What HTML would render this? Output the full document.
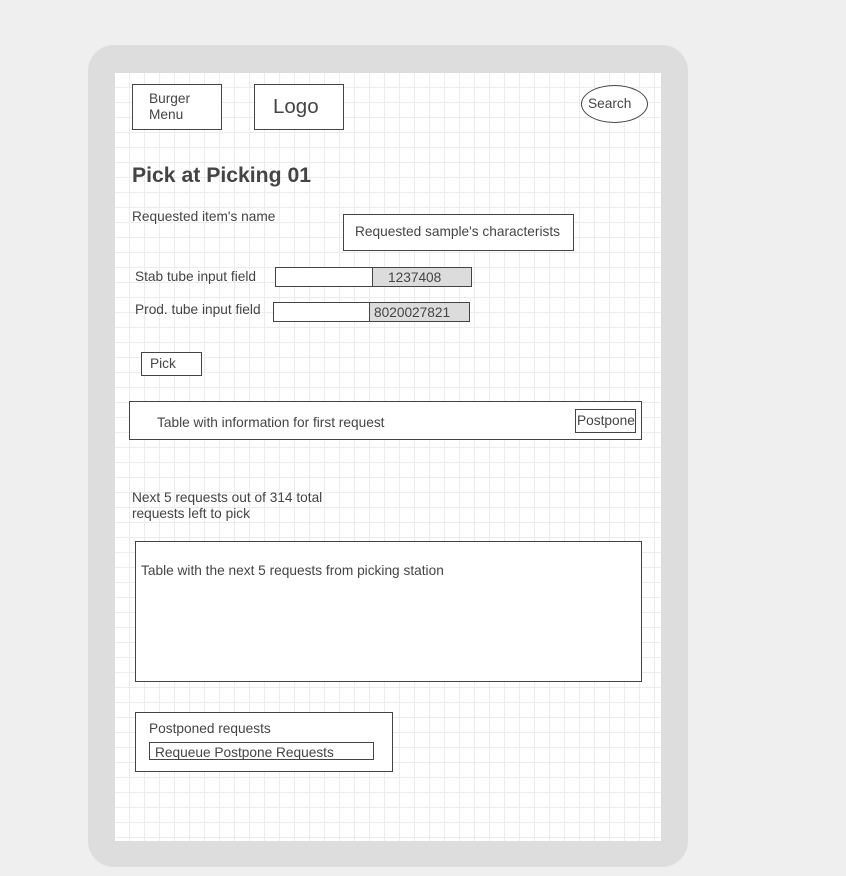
<!DOCTYPE html>
<html><head><style>
body{margin:0;width:846px;height:876px;background:#efefef;position:relative;font-family:"Liberation Sans",sans-serif;color:#444;overflow:hidden}
.frame{position:absolute;left:88px;top:45px;width:600px;height:822px;background:#dddddd;border-radius:26px}
.screen{position:absolute;left:115px;top:73px;width:546px;height:768px;background-color:#fff;
background-image:linear-gradient(#ececec 1px,transparent 1px),linear-gradient(90deg,#ececec 1px,transparent 1px);
background-size:15px 15px;background-position:-1px -1px}
.a{position:absolute;font-size:13.7px;line-height:16px;white-space:nowrap}
.b{position:absolute;border:1px solid #444;box-sizing:border-box;background:#fff}
</style></head><body>
<div class="frame"></div><div class="screen"></div>
<div class="b" style="left:132px;top:84px;width:90px;height:46px"></div>
<div class="a" style="left:149px;top:91px">Burger<br>Menu</div>
<div class="b" style="left:254px;top:84px;width:90px;height:46px"></div>
<div class="a" style="left:273px;top:96px;font-size:20.5px;line-height:22px">Logo</div>
<div class="b" style="left:581px;top:85px;width:67px;height:38px;border-radius:50%"></div>
<div class="a" style="left:588px;top:96px">Search</div>
<div class="a" style="left:132px;top:164px;font-size:21.2px;line-height:24px;font-weight:bold">Pick at Picking 01</div>
<div class="a" style="left:132px;top:209px">Requested item's name</div>
<div class="b" style="left:343px;top:214px;width:231px;height:37px"></div>
<div class="a" style="left:355px;top:224px">Requested sample's characterists</div>
<div class="a" style="left:135px;top:269px">Stab tube input field</div>
<div class="b" style="left:275px;top:267px;width:197px;height:20px"></div>
<div class="b" style="left:372px;top:267px;width:100px;height:20px;background:#dcdcdc"></div>
<div class="a" style="left:388px;top:270px">1237408</div>
<div class="a" style="left:135px;top:302px">Prod. tube input field</div>
<div class="b" style="left:273px;top:302px;width:197px;height:20px"></div>
<div class="b" style="left:369px;top:302px;width:101px;height:20px;background:#dcdcdc"></div>
<div class="a" style="left:374px;top:305px">8020027821</div>
<div class="b" style="left:141px;top:352px;width:61px;height:24px"></div>
<div class="a" style="left:150px;top:356px">Pick</div>
<div class="b" style="left:129px;top:401px;width:513px;height:39px"></div>
<div class="a" style="left:157px;top:415px">Table with information for first request</div>
<div class="b" style="left:575px;top:409px;width:61px;height:24px"></div>
<div class="a" style="left:577px;top:413px">Postpone</div>
<div class="a" style="left:132px;top:490px">Next 5 requests out of 314 total<br>requests left to pick</div>
<div class="b" style="left:135px;top:541px;width:507px;height:141px"></div>
<div class="a" style="left:141px;top:563px">Table with the next 5 requests from picking station</div>
<div class="b" style="left:135px;top:712px;width:258px;height:60px"></div>
<div class="a" style="left:149px;top:721px">Postponed requests</div>
<div class="b" style="left:149px;top:742px;width:225px;height:18px"></div>
<div class="a" style="left:155px;top:745px">Requeue Postpone Requests</div>
</body></html>
